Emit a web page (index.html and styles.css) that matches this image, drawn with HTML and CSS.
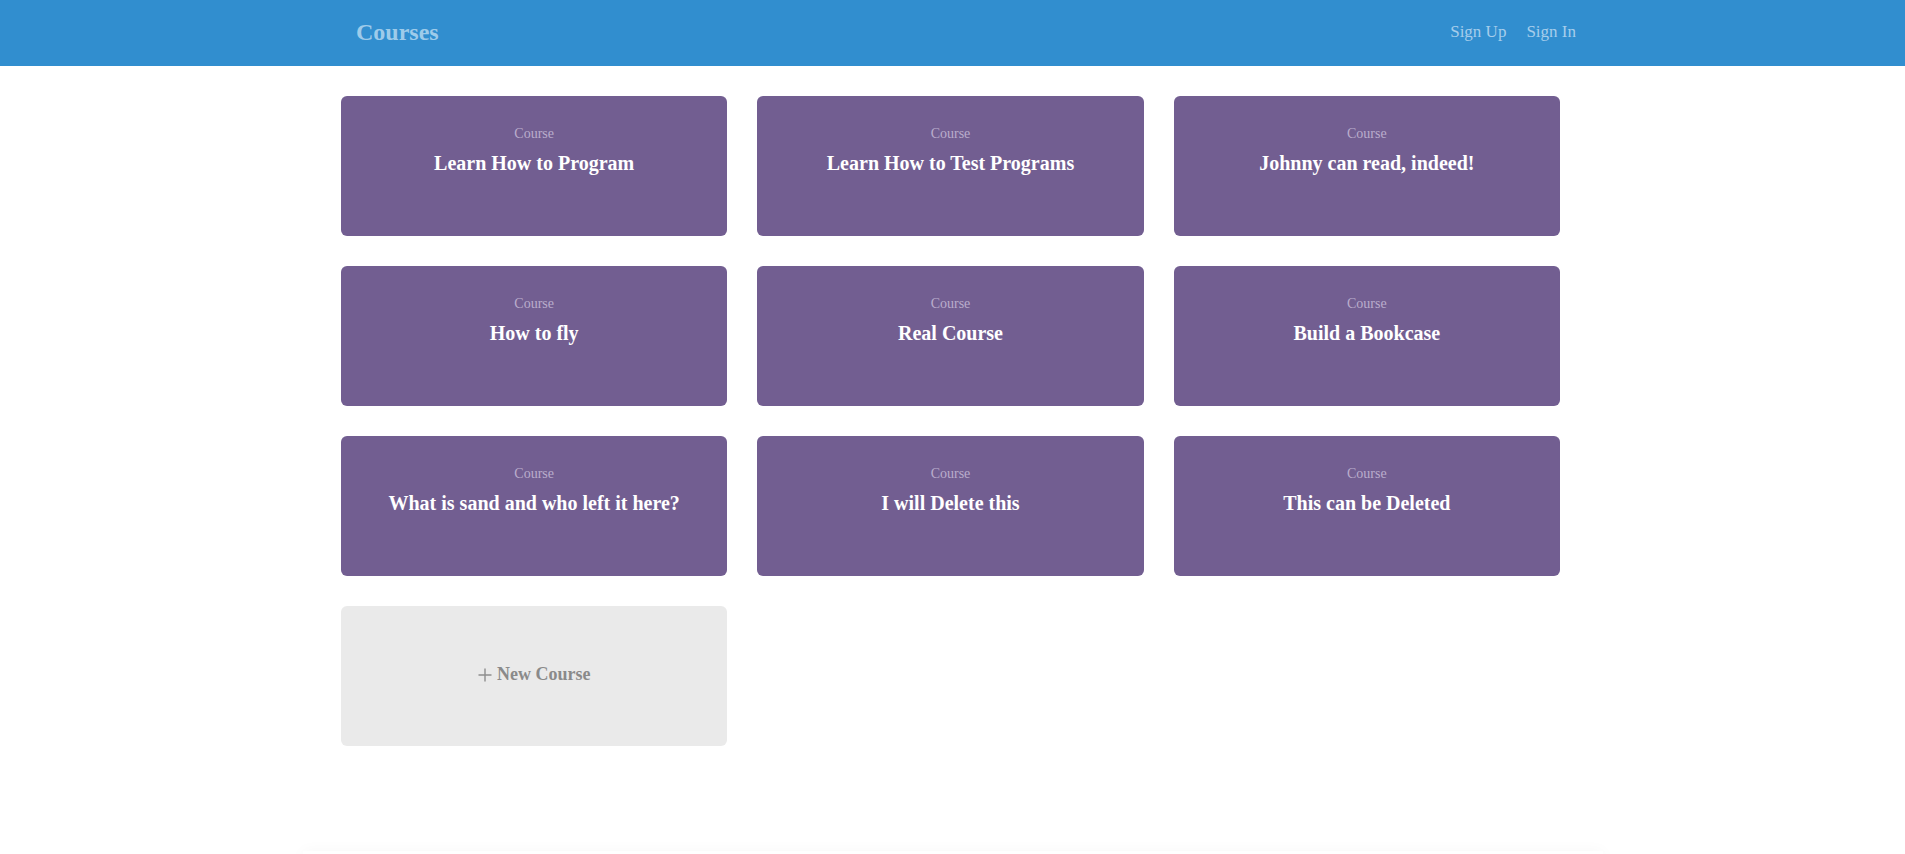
FILE: index.html
```html
<!DOCTYPE html>
<html>
<head>
<meta charset="utf-8">
<title>Courses</title>
<link rel="stylesheet" href="styles.css">
</head>
<body>
<header class="topbar">
  <div class="topbar-inner">
    <a class="brand" href="#">Courses</a>
    <nav class="nav">
      <a class="nav-link" href="#">Sign Up</a>
      <a class="nav-link" href="#">Sign In</a>
    </nav>
  </div>
</header>
<main class="content">
  <div class="grid">
    <a class="card" href="#"><div class="card-label">Course</div><div class="card-title">Learn How to Program</div></a>
    <a class="card" href="#"><div class="card-label">Course</div><div class="card-title">Learn How to Test Programs</div></a>
    <a class="card" href="#"><div class="card-label">Course</div><div class="card-title">Johnny can read, indeed!</div></a>
    <a class="card" href="#"><div class="card-label">Course</div><div class="card-title">How to fly</div></a>
    <a class="card" href="#"><div class="card-label">Course</div><div class="card-title">Real Course</div></a>
    <a class="card" href="#"><div class="card-label">Course</div><div class="card-title">Build a Bookcase</div></a>
    <a class="card" href="#"><div class="card-label">Course</div><div class="card-title">What is sand and who left it here?</div></a>
    <a class="card" href="#"><div class="card-label">Course</div><div class="card-title">I will Delete this</div></a>
    <a class="card" href="#"><div class="card-label">Course</div><div class="card-title">This can be Deleted</div></a>
    <a class="card card-new" href="#">
      <span class="new-inner">
        <svg class="plus" width="14" height="14" viewBox="0 0 14 14"><path d="M7 0.5V13.5M0.5 7H13.5" stroke="#8e8e8e" stroke-width="1.4" fill="none"/></svg>
        <span class="new-text">New Course</span>
      </span>
    </a>
  </div>
</main>
<footer class="footer"></footer>
</body>
</html>
```
FILE: styles.css
```css
html, body {
  margin: 0;
  padding: 0;
  background: #ffffff;
  font-family: "Liberation Serif", "Times New Roman", serif;
}

a {
  text-decoration: none;
}

.topbar {
  height: 66px;
  background: #318ecf;
}

.topbar-inner {
  width: 1220px;
  margin-left: 356px;
  padding-top: 17px;
  display: flex;
  justify-content: space-between;
  align-items: flex-start;
}

.brand {
  font-size: 24px;
  line-height: 30px;
  font-weight: bold;
  color: #9ecbea;
}

.nav {
  display: flex;
  gap: 20px;
  padding-top: 2px;
}

.nav-link {
  font-size: 17px;
  line-height: 26px;
  color: #a6cdeb;
}

.content {
  width: 1219px;
  margin-left: 341px;
  padding-top: 30px;
}

.grid {
  display: grid;
  grid-template-columns: repeat(3, 1fr);
  column-gap: 30px;
  row-gap: 30px;
}

.card {
  display: block;
  box-sizing: border-box;
  height: 140px;
  padding-top: 28px;
  border-radius: 6px;
  background: #725e91;
  text-align: center;
}

.card-label {
  font-size: 14px;
  line-height: 20px;
  color: #baadcc;
}

.card-title {
  margin-top: 5px;
  font-size: 20px;
  line-height: 28px;
  font-weight: bold;
  color: #ffffff;
}

.card-new {
  padding-top: 0;
  background: #eaeaea;
  display: flex;
  align-items: center;
  justify-content: center;
}

.new-inner {
  display: flex;
  align-items: center;
  gap: 5px;
  padding-bottom: 4px;
}

.plus {
  display: block;
  margin-top: 1px;
}

.new-text {
  font-size: 18px;
  line-height: 20px;
  font-weight: bold;
  color: #8a8a8a;
}

.footer {
  width: 1300px;
  height: 60px;
  margin: 105px auto 0;
  background: #ffffff;
  box-shadow: 0 0 14px rgba(0, 0, 0, 0.035);
}
```
